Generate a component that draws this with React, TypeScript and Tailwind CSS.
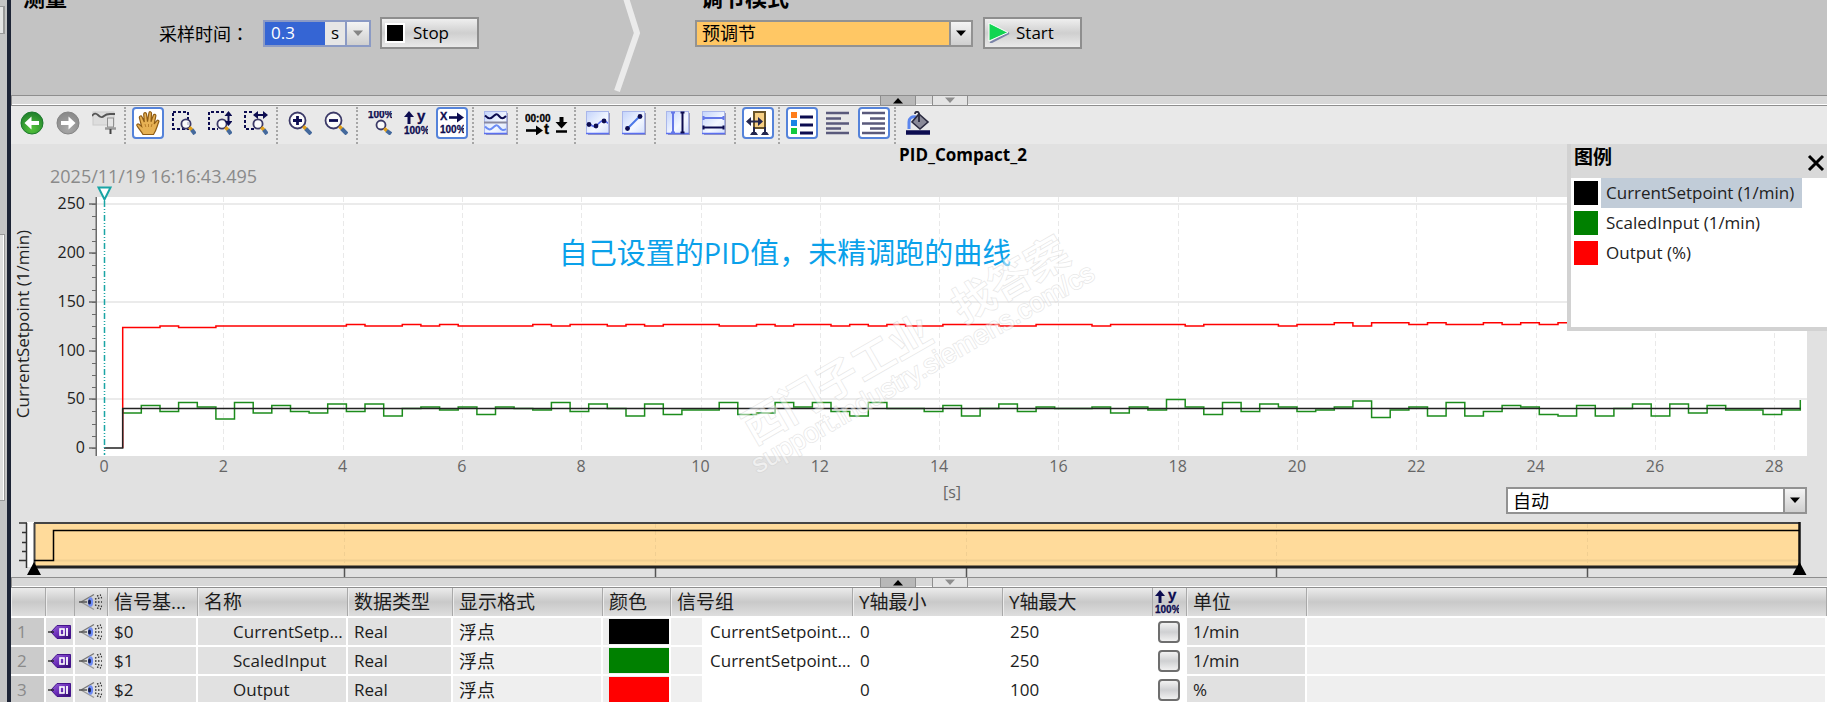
import { useState, type ReactNode } from 'react'
import clsx from 'clsx'

// ─── Types ────────────────────────────────────────────────────────────────────

interface Signal {
  base: string
  name: string
  dataType: string
  format: string
  swatch: string
  group: string
  yMin: string
  yMax: string
  unit: string
}

interface Tool {
  id: string
  label: string
  icon: ReactNode
  wide?: boolean
}

// ─── Constants ────────────────────────────────────────────────────────────────

const SIGNALS: Signal[] = [
  { base: '$0', name: 'CurrentSetpoint', dataType: 'Real', format: '浮点', swatch: 'bg-black', group: 'CurrentSetpoint_01', yMin: '0', yMax: '250', unit: '1/min' },
  { base: '$1', name: 'ScaledInput', dataType: 'Real', format: '浮点', swatch: 'bg-[#008000]', group: 'CurrentSetpoint_01', yMin: '0', yMax: '250', unit: '1/min' },
  { base: '$2', name: 'Output', dataType: 'Real', format: '浮点', swatch: 'bg-[#ff0000]', group: '', yMin: '0', yMax: '100', unit: '%' },
]

// Plot coordinates, in viewBox units
const PLOT_W = 1710
const PLOT_H = 259
const X0 = 7
const PX_PER_SEC = 59.65
const Y0 = 251
const PX_PER_UNIT = 0.975
const FIRST_SAMPLE = 25.7
const SAMPLE_STEP = 18.64

// Samples as quantised steps around the base level
const SCALED_INPUT = [
  -3, 2, -2, 4, 1, -7, 4, -3, 2, -2, -3, 3, -2, 3, -5, 0, 1, -1, 1, -4,
  1, 0, -1, 4, -2, 3, 0, -5, 3, -4, -1, -1, 4, -4, -3, 4, 1, 4, -2, -5,
  4, 0, 0, -2, 2, -5, 0, 3, -2, 1, 0, 0, 1, -3, 1, -1, 6, 1, -4, 4,
  -2, 3, 1, -2, -1, 1, 5, -6, -1, 1, -5, 4, -5, -2, 2, 1, -4, -5, 2, -5,
  0, 3, -5, 3, -3, 2, -1, -1, -4, -1,
]

const OUTPUT = [
  -1, -1, 0, -1, -1, 0, 0, 0, 0, 0, 0, 0, 1, 0, 0, 1, 0, 1, 0, 0,
  0, 0, 1, 0, 1, 1, 0, 1, 0, 1, 1, 1, 0, 0, 1, 0, 1, 1, 0, 1,
  0, 1, 0, 0, 1, 1, 1, 0, 0, 1, 1, 1, 0, 1, 1, 1, 1, 0, 1, 1,
  1, 1, 0, 1, 1, 2, 0, 2, 2, 1, 2, 1, 1, 2, 1, 2, 1, 2, 2, 1,
  2, 2, 1, 2, 1, 2, 2, 1, 2, 2,
]

const X_TICKS = [0, 2, 4, 6, 8, 10, 12, 14, 16, 18, 20, 22, 24, 26, 28]
const Y_TICKS = [0, 50, 100, 150, 200, 250]

const NAVY = '#0c0c50'

// ─── Helpers ──────────────────────────────────────────────────────────────────

const xAt = (s: number) => X0 + s * PX_PER_SEC
const yAt = (v: number) => Y0 - v * PX_PER_UNIT

function stepPath(start: string, samples: number[], base: number, step: number): string {
  const parts = samples.map((n, i) => {
    const y = (base - n * step).toFixed(1)
    return `V${y} H${(FIRST_SAMPLE + (i + 1) * SAMPLE_STEP).toFixed(1)}`
  })
  return `${start} ${parts.join(' ')}`
}

// ─── Icons ────────────────────────────────────────────────────────────────────

function Icon({ children, w = 24 }: { children: ReactNode; w?: number }) {
  return (
    <svg width={w} height="24" viewBox={`0 0 ${w} 24`} fill="none" aria-hidden="true">
      {children}
    </svg>
  )
}

function Lens({ cx, cy, r }: { cx: number; cy: number; r: number }) {
  const e = r * 0.72
  return (
    <>
      <circle cx={cx} cy={cy} r={r} fill="#fff" fillOpacity=".8" stroke="#3c3a68" strokeWidth="1.8" />
      <path d={`M${cx + e} ${cy + e} l3 3`} stroke="#e0a01c" strokeWidth="3.4" />
      <path d={`M${cx + e + 2.5} ${cy + e + 2.5} L23 23`} stroke="#44699c" strokeWidth="4" />
    </>
  )
}

function SvgText({ x, y, size = 9, fill = NAVY, children }: { x: number; y: number; size?: number; fill?: string; children: string }) {
  return (
    <text x={x} y={y} fontSize={size} fontWeight="700" fill={fill} stroke={fill} strokeWidth=".3" fontFamily="Liberation Sans, sans-serif">
      {children}
    </text>
  )
}

function Round({ id, from, to, d }: { id: string; from: string; to: string; d: string }) {
  return (
    <Icon>
      <defs>
        <radialGradient id={id} cx=".5" cy=".75" r=".8">
          <stop offset="0" stopColor={from} />
          <stop offset="1" stopColor={to} />
        </radialGradient>
      </defs>
      <circle cx="12" cy="12" r="11" fill={`url(#${id})`} stroke={to} />
      <path d={d} fill="#fff" />
    </Icon>
  )
}

function Tile() {
  return (
    <>
      <defs>
        <linearGradient id="tile" x1="0" y1="0" x2="1" y2="1">
          <stop offset="0" stopColor="#c3d3fb" />
          <stop offset=".6" stopColor="#f4f8ff" />
          <stop offset="1" stopColor="#d5e0fb" />
        </linearGradient>
      </defs>
      <path d="M2 23.500H23.500V2" stroke="#9a9ab8" strokeWidth="1.500" />
      <rect x=".5" y=".5" width="22" height="22" fill="url(#tile)" stroke="#a9b6ea" />
      <path d="M0 22.500H23" stroke="#5b6ff0" strokeWidth="1.500" />
    </>
  )
}

function Y100() {
  return (
    <Icon>
      <path d="M5 13V4" stroke={NAVY} strokeWidth="3" />
      <path d="M5 0L0 6h10z" fill={NAVY} />
      <SvgText x={13} y={10} size={15}>y</SvgText>
      <SvgText x={0} y={23} size={10}>100%</SvgText>
    </Icon>
  )
}

function Eye() {
  return (
    <svg width="24" height="18" viewBox="0 0 24 18" fill="none" aria-hidden="true">
      <path d="M15 1.500L2 9" stroke="#777" strokeWidth="1.400" />
      <path d="M2 9l13 7.500" stroke="#999" strokeWidth="1.400" />
      <path d="M0 9H8" stroke="#555" strokeWidth="1.500" />
      <ellipse cx="11.500" cy="9" rx="2.600" ry="4.800" fill="#6f8cf5" />
      <ellipse cx="10.500" cy="9" rx="1.500" ry="2.500" fill="#1d2350" />
      <path d="M16 9h7M16 6l7-1.500M16 12l7 1.500M18 3l4-1M18 15l4 1" stroke="#333" strokeWidth="1.400" strokeDasharray="1.500 1.500" />
    </svg>
  )
}

function Tag() {
  return (
    <svg width="24" height="16" viewBox="0 0 24 16" fill="none" aria-hidden="true">
      <defs>
        <linearGradient id="tag" x1="0" y1="0" x2="1" y2="1">
          <stop offset="0" stopColor="#9a6ad8" />
          <stop offset=".5" stopColor="#6a2cb8" />
          <stop offset="1" stopColor="#2c0a66" />
        </linearGradient>
      </defs>
      <path d="M3 8L9 1.500H22.500V14.500H9z" fill="url(#tag)" stroke="#45148c" />
      <path d="M0 8h6" stroke="#222" strokeWidth="1.300" />
      <rect x="12" y="5" width="4" height="6" stroke="#fff" strokeWidth="1.600" />
      <path d="M19 4v8" stroke="#fff" strokeWidth="1.800" />
    </svg>
  )
}

const TOOL_GROUPS: Tool[][] = [
  [
    { id: 'back', label: '后退', icon: <Round id="gBack" from="#55c43a" to="#1c7a2c" d="M4.500 12L11.500 5.500V10H19v4h-7.500v4.500z" /> },
    { id: 'forward', label: '前进', icon: <Round id="gFwd" from="#a9a9a9" to="#858585" d="M19.500 12L12.500 5.500V10H5v4h7.500v4.500z" /> },
    {
      id: 'pin',
      label: '固定',
      icon: (
        <Icon>
          <rect x="1" y="1" width="21" height="13" fill="#ddd" stroke="#cacaca" />
          <path d="M0 5c2 -3 4 -3 6 -1s4 3 6 1 4 -2 6 -2h5" stroke="#555" strokeWidth="1.800" />
          <rect x="15.500" y="7" width="6" height="9" fill="#e4e4e4" stroke="#909090" />
          <path d="M13 17.500h11" stroke="#999" strokeWidth="2.500" />
          <path d="M18.500 18v5" stroke="#444" strokeWidth="2" />
        </Icon>
      ),
    },
  ],
  [
    {
      id: 'hand',
      label: '移动视图',
      icon: (
        <Icon>
          <path
            d="M7 23.500C5 20 2.500 17.500 1 14.800c-.6-1.400.8-2.400 2-1.600l2.600 2.200L3.400 6.800c-.3-2 2-2.600 2.700-.8L8.300 11 7.700 3.200c0-2 2.400-2.200 2.800-.3l1 7.700L12.900 2c.3-1.900 2.700-1.600 2.600.4l-.5 8.500 2.300-6.600c.7-1.800 2.900-1 2.500.9L18.200 13l2.500-3.200c1.200-1.200 2.700-.2 2 1.300C21 15 20.500 19 17.500 23.500z"
            fill="#e6b154"
            stroke="#8f5c14"
            strokeWidth="1.200"
          />
          <path d="M9 13l.8 3M12.500 13v3M16 13l-.8 3" stroke="#b97f2c" />
        </Icon>
      ),
    },
    {
      id: 'zoom-area',
      label: '缩放选择',
      icon: (
        <Icon>
          <rect x="1" y="1" width="15" height="17" stroke={NAVY} strokeWidth="2" strokeDasharray="3 2" />
          <Lens cx={14} cy={13} r={4.6} />
        </Icon>
      ),
    },
    {
      id: 'zoom-y',
      label: '垂直缩放选择',
      icon: (
        <Icon>
          <path d="M16 1H1v17h9" stroke={NAVY} strokeWidth="2" strokeDasharray="3 2" />
          <Lens cx={14} cy={13} r={4.6} />
          <path d="M20.500 3v10" stroke={NAVY} strokeWidth="2" />
          <path d="M20.500 0l4 5h-8zM20.500 15l4-5h-8z" fill={NAVY} />
        </Icon>
      ),
    },
    {
      id: 'zoom-x',
      label: '水平缩放选择',
      icon: (
        <Icon>
          <path d="M8 1H1v17h9" stroke={NAVY} strokeWidth="2" strokeDasharray="3 2" />
          <Lens cx={14} cy={13} r={4.6} />
          <path d="M12 4h10" stroke={NAVY} strokeWidth="2" />
          <path d="M9 4l5-4v8zM24 4l-5-4v8z" fill={NAVY} />
        </Icon>
      ),
    },
  ],
  [
    {
      id: 'zoom-in',
      label: '放大',
      icon: (
        <Icon>
          <Lens cx={9.5} cy={9.5} r={8} />
          <path d="M9.500 5v9M5 9.500h9" stroke={NAVY} strokeWidth="2.800" />
        </Icon>
      ),
    },
    {
      id: 'zoom-out',
      label: '缩小',
      icon: (
        <Icon>
          <Lens cx={9.5} cy={9.5} r={8} />
          <path d="M5 9.500h9" stroke={NAVY} strokeWidth="2.800" />
        </Icon>
      ),
    },
  ],
  [
    {
      id: 'fit-all',
      label: '全部显示',
      icon: (
        <Icon>
          <SvgText x={0} y={7} size={10}>100%</SvgText>
          <Lens cx={13} cy={14} r={4.5} />
        </Icon>
      ),
    },
    { id: 'fit-y', label: 'Y轴缩放', icon: <Y100 /> },
    {
      id: 'fit-x',
      label: 'X轴缩放',
      icon: (
        <Icon>
          <SvgText x={0} y={9} size={11}>X</SvgText>
          <path d="M9 6.500h9" stroke={NAVY} strokeWidth="2.600" />
          <path d="M24 6.500l-7-5v10z" fill={NAVY} />
          <SvgText x={0} y={22} size={10}>100%</SvgText>
        </Icon>
      ),
    },
  ],
  [
    {
      id: 'lanes',
      label: '在单独的区域中显示',
      icon: (
        <Icon>
          <Tile />
          <path d="M0 11.500h23" stroke="#8a8aa0" strokeWidth="2" />
          <path d="M1 4.500c3 3 5 4 7.500 1.500s4 -4 6.500 -1 4 3 7 0" stroke={NAVY} strokeWidth="2" />
          <path d="M1 15.500c3 3 5 4 7.500 1.500s4 -4 6.500 -1 4 4 7 2" stroke="#6b8cf5" strokeWidth="2" />
        </Icon>
      ),
    },
  ],
  [
    {
      id: 'time',
      label: '时间轴单位',
      wide: true,
      icon: (
        <Icon w={44}>
          <SvgText x={0} y={11} size={10} fill="#000">00:00</SvgText>
          <path d="M1 19.500h11" stroke="#000" strokeWidth="2.600" />
          <path d="M18 19.500l-7-5v10z" fill="#000" />
          <SvgText x={19} y={23} size={15} fill="#000">t</SvgText>
          <path d="M36.500 6v6" stroke="#000" strokeWidth="4" />
          <path d="M36.500 17.500l-6-6.500h12z" fill="#000" />
          <path d="M31 20.500h11" stroke="#000" strokeWidth="2.500" />
        </Icon>
      ),
    },
  ],
  [
    {
      id: 'samples',
      label: '显示采样值',
      icon: (
        <Icon>
          <Tile />
          <path d="M3 14c3 -1 4 3 7 1s4 -6 8 -5 3 2 4 2" stroke="#5b6ff0" strokeWidth="1.600" />
          <circle cx="3" cy="13.500" r="2.400" fill={NAVY} />
          <circle cx="10" cy="15" r="2.400" fill={NAVY} />
          <circle cx="18" cy="10" r="2.400" fill={NAVY} />
        </Icon>
      ),
    },
    {
      id: 'interpolate',
      label: '插补采样值',
      icon: (
        <Icon>
          <Tile />
          <path d="M5 18L18 5" stroke="#4a78e8" strokeWidth="2" />
          <circle cx="5.500" cy="17.500" r="2.400" fill={NAVY} />
          <circle cx="18" cy="5.500" r="2.400" fill={NAVY} />
        </Icon>
      ),
    },
  ],
  [
    {
      id: 'v-cursors',
      label: '垂直测量光标',
      icon: (
        <Icon>
          <Tile />
          <path d="M7 1v21M5 1.500h4M5 21.500h4" stroke="#6478e8" strokeWidth="2" />
          <path d="M16.500 1v21M14.500 1.500h4M14.500 21.500h4" stroke={NAVY} strokeWidth="2" />
        </Icon>
      ),
    },
    {
      id: 'h-cursors',
      label: '水平测量光标',
      icon: (
        <Icon>
          <Tile />
          <path d="M1 7h21M1.500 5v4M21.500 5v4" stroke="#6478e8" strokeWidth="2" />
          <path d="M1 16.500h21M1.500 14.500v4M21.500 14.500v4" stroke={NAVY} strokeWidth="2" />
        </Icon>
      ),
    },
  ],
  [
    {
      id: 'chart-window',
      label: '图表窗口',
      icon: (
        <Icon>
          <rect x="8" y="1" width="11" height="16" fill="#f7cf84" stroke="#6a5428" strokeWidth="2" />
          <path d="M4 10.500h9" stroke="#23264e" strokeWidth="2" />
          <path d="M0 10.500l5-4.500v9zM17 10.500l-5-4.500v9z" fill="#23264e" />
          <path d="M8 16v6M19 16v6" stroke="#23264e" strokeWidth="2" />
          <path d="M4 24l2-3h4l2 3zM15 24l2-3h4l2 3z" fill="#23264e" />
        </Icon>
      ),
    },
  ],
  [
    {
      id: 'legend',
      label: '显示图例',
      icon: (
        <Icon>
          <rect x="1" y="1" width="6" height="6" fill="#ff7d1a" />
          <rect x="1" y="9" width="6" height="6" fill="#1a84e6" />
          <rect x="1" y="17" width="6" height="6" fill="#12c93e" />
          <path d="M10 6h13M10 14h13M10 22h13" stroke={NAVY} strokeWidth="2.800" />
        </Icon>
      ),
    },
    { id: 'align-left', label: '左对齐', icon: <Icon><path d="M0 2h23M0 7.500h15M0 12.500h23M0 17.500h15M0 22h23" stroke="#5a5a7c" strokeWidth="2.400" /></Icon> },
    { id: 'align-right', label: '右对齐', icon: <Icon><path d="M0 2h23M8 7.500h15M0 12.500h23M8 17.500h15M0 22h23" stroke="#5a5a7c" strokeWidth="2.400" /></Icon> },
  ],
  [
    {
      id: 'background',
      label: '背景色',
      icon: (
        <Icon>
          <path d="M3 18V11c0-4 3-6 7-5" stroke="#5b85ee" strokeWidth="3" />
          <path d="M13 3l9 8-8 7-8-7z" fill="#8a8a98" stroke="#2b2b40" strokeWidth="1.600" />
          <path d="M13 11V3c0-3-4-3-4 0" stroke="#2b2b40" strokeWidth="1.800" />
          <path d="M0 21.500h24" stroke={NAVY} strokeWidth="4.500" />
        </Icon>
      ),
    },
  ],
]

// ─── Small Parts ──────────────────────────────────────────────────────────────

function Arrow({ up, className }: { up?: boolean; className?: string }) {
  return (
    <svg width="12" height="7" viewBox="0 0 12 7" className={className} aria-hidden="true">
      <path d={up ? 'M1 6.500h10L6 1z' : 'M1 .5h10L6 6z'} fill="currentColor" />
    </svg>
  )
}

function Splitter() {
  return (
    <div className="flex h-[11px] shrink-0 justify-center border-y border-l border-[#8e8e8e] bg-[#d8d8d8] pl-2 shadow-[inset_0_-1px_0_#fff]">
      <button aria-label="向上折叠" className="flex w-9 items-center justify-center border-x border-[#8e8e8e] bg-[#b8b8b8]">
        <Arrow up />
      </button>
      <button aria-label="向下折叠" className="ml-4 flex w-9 items-center justify-center border-x border-[#8e8e8e] bg-[#e4e4e4] text-[#8e8e8e]">
        <Arrow />
      </button>
    </div>
  )
}

function Combo({ id, label, option, className }: { id: string; label: string; option: string; className: string }) {
  return (
    <div className="relative h-[27px]">
      <select id={id} aria-label={label} className={clsx('h-full w-full appearance-none border-2 border-[#929292] px-[5px] text-lg leading-none', className)}>
        <option>{option}</option>
      </select>
      <span className="pointer-events-none absolute top-0 right-0 flex h-full w-6 items-center justify-center border-2 border-[#929292] bg-linear-to-b from-[#f4f4f4] to-[#cfcfcf]">
        <Arrow />
      </span>
    </div>
  )
}

function ActionButton({ icon, children }: { icon: ReactNode; children: string }) {
  return (
    <button className="flex h-8 w-[99px] items-center gap-[6px] border-2 border-[#8e8e8e] bg-linear-to-b from-[#efefef] via-[#cfcfcf] to-[#e9e9e9] px-[3px] text-[17px]">
      {icon}
      {children}
    </button>
  )
}

// ─── Controller Settings ──────────────────────────────────────────────────────

function SettingsBar() {
  return (
    <div className="flex h-[95px] shrink-0 overflow-hidden bg-[#c3c3c3]">
      <section className="w-[600px] shrink-0 pl-3">
        <h2 className="flex h-2 items-end text-[22px] leading-[22px] font-bold">测量</h2>
        <div className="mt-[9px] flex h-8 items-center pl-[136px]">
          <label htmlFor="sample-time" className="w-[104px] text-lg">
            采样时间<span lang="zh-TW" className="font-['Noto_Sans_CJK_TC',sans-serif]">：</span>
          </label>
          <div className="flex h-[27px] w-[108px] border-2 border-[#8b9ac4] bg-[#e6e6e6] text-[17px]">
            <input id="sample-time" defaultValue="0.3" className="min-w-0 flex-1 bg-[#3565d4] px-[6px] text-white outline-none" />
            <span className="flex w-5 items-center justify-center">s</span>
            <button aria-label="选择采样时间" className="flex w-6 items-center justify-center border-l-2 border-[#8b9ac4] bg-linear-to-b from-[#f4f4f4] to-[#cfcfcf] text-[#858585]">
              <Arrow />
            </button>
          </div>
          <div className="ml-[9px]">
            <ActionButton icon={<span className="mr-[2px] h-5 w-5 border-2 border-white bg-black" />}>Stop</ActionButton>
          </div>
        </div>
      </section>

      <svg width="30" height="95" viewBox="0 0 30 95" fill="none" className="shrink-0" aria-hidden="true">
        <path d="M15 -2L26 33 6 91" stroke="#ebebeb" strokeWidth="6" />
      </svg>

      <section className="pl-[54px]">
        <h2 className="ml-[6px] flex h-2 items-end text-[22px] leading-[22px] font-bold">调节模式</h2>
        <div className="mt-[9px] flex h-8 items-center gap-[10px]">
          <div className="w-[278px]">
            <Combo id="tuning-mode" label="调节模式" option="预调节" className="bg-[#ffc764]" />
          </div>
          <ActionButton
            icon={
              <svg width="22" height="20" viewBox="0 0 22 20" aria-hidden="true">
                <path d="M2 20L21 10" stroke="#7b84a8" strokeWidth="2" />
                <path d="M1 0v18L20 9.500z" fill="#12d552" stroke="#fff" />
              </svg>
            }
          >
            Start
          </ActionButton>
        </div>
      </section>
    </div>
  )
}

// ─── Toolbar ──────────────────────────────────────────────────────────────────

function Toolbar() {
  const [pressed, setPressed] = useState<string[]>(['hand', 'fit-x', 'chart-window', 'legend', 'align-right'])
  const toggle = (id: string) => setPressed(p => (p.includes(id) ? p.filter(x => x !== id) : [...p, id]))

  return (
    <div role="toolbar" className="flex h-[38px] shrink-0 gap-1 bg-[#e9e9e9] pt-px pl-[5px]">
      {TOOL_GROUPS.map((group, i) => (
        <div key={group[0].id} className="flex gap-1">
          {i > 0 && <span className="w-1 border-l-2 border-dotted border-[#a6a6a6]" />}
          {group.map(tool => (
            <button
              key={tool.id}
              aria-label={tool.label}
              aria-pressed={pressed.includes(tool.id)}
              onClick={() => toggle(tool.id)}
              className={clsx(
                'flex h-8 items-center justify-center rounded-sm border-2',
                tool.wide ? 'w-[46px]' : 'w-8',
                pressed.includes(tool.id) ? 'border-[#5583da] bg-white' : 'border-transparent',
              )}
            >
              <span className="shrink-0">{tool.icon}</span>
            </button>
          ))}
        </div>
      ))}
    </div>
  )
}

// ─── Trend Chart ──────────────────────────────────────────────────────────────

function YAxis() {
  const minor = Array.from({ length: 21 }, (_, i) => i * 12.5)
  return (
    <svg width="86" height="283" className="shrink-0 overflow-visible" fontSize="16">
      <text transform="translate(18 127) rotate(-90)" textAnchor="middle" fontSize="17" fill="#222">
        CurrentSetpoint (1/min)
      </text>
      <path d="M85.500 0V259" stroke="#6b6b6b" strokeWidth="2" />
      {minor.map(v => (
        <path key={v} d={`M81 ${Math.round(yAt(v))}.500h5`} stroke="#6b6b6b" />
      ))}
      {Y_TICKS.map(v => (
        <g key={v}>
          <path d={`M78 ${Math.round(yAt(v))}h8`} stroke="#6b6b6b" strokeWidth="1.500" />
          <text x="74" y={Math.round(yAt(v)) + 5} textAnchor="end" fill="#222">{v}</text>
        </g>
      ))}
    </svg>
  )
}

function Plot() {
  const greenPath = stepPath(`M${FIRST_SAMPLE} 211.500`, SCALED_INPUT, 211.5, 1.5) + ' V203'
  const redPath = stepPath(`M${FIRST_SAMPLE} 251`, OUTPUT, 129, 1.6)

  return (
    <svg width="100%" height="283" className="min-w-0 flex-1 overflow-visible" fontSize="16">
      <svg width="100%" height={PLOT_H} viewBox={`0 0 ${PLOT_W} ${PLOT_H}`} preserveAspectRatio="none" fill="none" className="overflow-visible">
        <rect width={PLOT_W} height={PLOT_H} fill="#fff" />
        {[50, 150, 250].map(v => (
          <path key={v} d={`M0 ${Math.round(yAt(v))}H${PLOT_W}`} stroke="#ebebeb" strokeWidth="2" />
        ))}
        {X_TICKS.slice(1).map(s => (
          <path key={s} d={`M${Math.round(xAt(s))}.500 0V256`} stroke="#e9e9e9" strokeDasharray="5 3" />
        ))}
        <path d={greenPath} stroke="#1c8c1c" strokeWidth="1.500" />
        <path d={redPath} stroke="#ff0000" strokeWidth="1.500" />
        <path d={`M${X0} 251H${FIRST_SAMPLE}V211.500H1703.500`} stroke="#222" strokeWidth="1.500" />
        <path d={`M${X0 + 0.5} 4V258`} stroke="#1aa5a5" strokeWidth="1.500" strokeDasharray="6 2 1 2 1 2" />
        <path d={`M${X0 - 5.5} -9.500h12l-6 12z`} fill="#fff" stroke="#1aa5a5" strokeWidth="2" />
      </svg>

      {X_TICKS.map(s => (
        <text key={s} x={`${(xAt(s) / PLOT_W) * 100}%`} y="275" textAnchor="middle" fill="#666">{s}</text>
      ))}

      <text x="27%" y="67" fontSize="29" fill="#0aa1ea">自己设置的PID值，未精调跑的曲线</text>

      {/* Outlined stamp laid across the traces */}
      <svg x="38.400%" y="270" className="overflow-visible" fill="#fff" stroke="#d0d0d0" strokeWidth="1.500" paintOrder="stroke" opacity=".5">
        <g transform="rotate(-30)">
          <text x="11" y="-19" fontSize="42" fontWeight="500">西门子工业</text>
          <text x="253" y="-19" fontSize="42" fontWeight="500">找答案</text>
          <text x="0" y="8" fontSize="27" fontFamily="Liberation Sans, sans-serif">support.industry.siemens.com/cs</text>
        </g>
      </svg>
    </svg>
  )
}

function Overview() {
  return (
    <svg width="100%" height="55" viewBox="0 0 1816 55" preserveAspectRatio="none" fill="none" className="block" aria-hidden="true">
      <rect x="16" y="0" width="7" height="45" fill="#fff" />
      <path d="M15.500 1V46M8 1h8M11 10.500h5M11 20.500h5M11 29.500h5M8 38.500h8" stroke="#333" strokeWidth="1.500" />
      <rect x="23" y="1" width="1766" height="44" fill="#ffdb9b" />
      <path d="M23 38.500H1789" stroke="#f1cf92" strokeWidth="2" />
      {[333, 644, 955, 1265, 1576].map(x => (
        <g key={x}>
          <path d={`M${x}.500 2V44`} stroke="#f1cf92" strokeDasharray="4 3" />
          <path d={`M${x}.500 46v9`} stroke="#555" strokeWidth="1.500" />
        </g>
      ))}
      <path d="M23.500 1V45M23 1H1789" stroke="#444" strokeWidth="2" />
      <path d="M23 45H1789" stroke="#222" strokeWidth="3" />
      <path d="M1788.500 0V46" stroke="#111" strokeWidth="2.500" />
      <path d="M23 38.500H42.500V8.500H1788" stroke="#000" strokeWidth="1.500" />
      <path d="M23 40l7 13H16zM1788.500 40l7 13h-14z" fill="#000" />
    </svg>
  )
}

function Legend({ onClose }: { onClose: () => void }) {
  return (
    <aside className="absolute top-0 right-0 h-[187px] w-[260px] border-b-4 border-l-4 border-[#d2d2d2] bg-white">
      <div className="flex h-[34px] items-center justify-between bg-[#d9d9d9] pr-[2px] pl-[3px]">
        <h3 className="pb-2 text-[19px] leading-none font-bold">图例</h3>
        <button aria-label="关闭图例" onClick={onClose}>
          <svg width="18" height="18" viewBox="0 0 18 18" className="mt-1" aria-hidden="true">
            <path d="M2 2l14 14M16 2L2 16" stroke="#000" strokeWidth="3" />
          </svg>
        </button>
      </div>
      <ul>
        {SIGNALS.map((s, i) => (
          <li key={s.base} className="flex h-[30px] items-center gap-[3px] pl-[3px]">
            <span className={clsx('h-6 w-6 shrink-0', s.swatch)} />
            <span className={clsx('flex h-full items-center pr-2 pl-[5px] text-[17px] whitespace-nowrap text-[#222]', i === 0 && 'bg-[#c1ccd8]')}>
              {s.name} ({s.unit})
            </span>
          </li>
        ))}
      </ul>
    </aside>
  )
}

function TrendView() {
  const [legendOpen, setLegendOpen] = useState(true)

  return (
    <section className="relative shrink-0 bg-[#e1e1e1]">
      <h1 className="h-[22px] pl-[88px] text-center text-[17px] leading-[22px] font-bold">PID_Compact_2</h1>
      <p className="h-[31px] pl-[39px] text-lg leading-5 text-[#8a8a8a]">2025/11/19 16:16:43.495</p>
      <div className="flex pr-5">
        <YAxis />
        <Plot />
      </div>
      <div className="flex h-[34px] items-end pr-5 pl-[86px]">
        <span className="flex-1" />
        <span className="pb-[10px] text-base leading-6 text-[#666]">[s]</span>
        <div className="flex flex-1 justify-end">
          <div className="w-[301px]">
            <Combo id="time-range" label="时间范围" option="自动" className="bg-white" />
          </div>
        </div>
      </div>
      <div className="pt-2">
        <Overview />
      </div>
      {legendOpen && <Legend onClose={() => setLegendOpen(false)} />}
    </section>
  )
}

// ─── Signal Table ─────────────────────────────────────────────────────────────

function Head({ children }: { children?: ReactNode }) {
  return (
    <th className="truncate border-r border-[#a9a9a9] pr-0 pl-[6px] text-left font-normal shadow-[inset_1px_0_0_#ececec]">
      {children}
    </th>
  )
}

function SignalTable() {
  return (
    <table className="w-full shrink-0 table-fixed border-separate border-spacing-0 text-[17px] text-[#1c1c1c]">
      <colgroup>
        <col className="w-[35px]" />
        <col className="w-[29px]" />
        <col className="w-[33px]" />
        <col className="w-[90px]" />
        <col className="w-[150px]" />
        <col className="w-[105px]" />
        <col className="w-[150px]" />
        <col className="w-[68px]" />
        <col className="w-[182px]" />
        <col className="w-[150px]" />
        <col className="w-[150px]" />
        <col className="w-[34px]" />
        <col className="w-[120px]" />
        <col />
      </colgroup>
      <thead className="bg-linear-to-b from-[#ececec] via-[#c9c9c9] to-[#dedede] text-[19px] leading-none">
        <tr className="h-7">
          <Head />
          <Head />
          <th className="border-r border-[#a9a9a9] pl-1"><Eye /></th>
          <Head>信号基...</Head>
          <Head>名称</Head>
          <Head>数据类型</Head>
          <Head>显示格式</Head>
          <Head>颜色</Head>
          <Head>信号组</Head>
          <Head>Y轴最小</Head>
          <Head>Y轴最大</Head>
          <th className="border-r border-[#a9a9a9] pl-[2px]"><Y100 /></th>
          <Head>单位</Head>
          <Head />
        </tr>
      </thead>
      <tbody className="[&_td]:h-[29px] [&_td]:border-t-2 [&_td]:border-r-2 [&_td]:border-white [&_td]:py-0 [&_td]:leading-6">
        {SIGNALS.map((s, i) => (
          <tr key={s.base}>
            <td className="bg-[#cbcbcb] pl-[6px] text-[#8a8a8a]">{i + 1}</td>
            <td className="bg-[#e1e1e1] pl-[2px]"><Tag /></td>
            <td className="bg-[#e1e1e1] pl-1"><Eye /></td>
            <td className="bg-[#e1e1e1] pl-[6px]">{s.base}</td>
            <td className="truncate bg-[#e1e1e1] pl-[35px]">{s.name}</td>
            <td className="bg-[#e1e1e1] pl-[6px]">{s.dataType}</td>
            <td className="bg-[#efefef] pl-[6px] text-lg">{s.format}</td>
            <td className="bg-[#efefef] pl-[6px]">
              <div className={clsx('h-[25px]', s.swatch)} />
            </td>
            <td className="bg-[#efefef]">
              <div className="ml-[31px] h-[27px] truncate bg-white pl-2 leading-[27px]">{s.group}</div>
            </td>
            <td className="bg-white pl-[7px]">{s.yMin}</td>
            <td className="bg-white pl-[7px]">{s.yMax}</td>
            <td className="bg-white pl-[5px]">
              <input
                type="checkbox"
                aria-label={`${s.name} Y轴缩放`}
                className="block h-[22px] w-[22px] appearance-none rounded-sm border-2 border-[#6e6e6e] bg-linear-to-b from-[#f2f2f2] via-[#cfd0d2] to-[#f0f0f0] checked:bg-[#5583da]"
              />
            </td>
            <td className="bg-[#e1e1e1] pl-[6px]">{s.unit}</td>
            <td className="bg-[#efefef]" />
          </tr>
        ))}
      </tbody>
    </table>
  )
}

// ─── Main Component ───────────────────────────────────────────────────────────

export default function App() {
  return (
    <div className="flex h-screen overflow-hidden bg-white font-['Open_Sans','Noto_Sans_CJK_SC',sans-serif] text-black">
      {/* Edge of the neighbouring project panel */}
      <div className="w-[7px] shrink-0 bg-[#c4c4c4] pr-[2px]">
        <div className="mt-[6px] h-7 border-y border-r-2 border-[#999] bg-[#e4e4e4]" />
        <div className="mt-[200px] h-[267px] border-y border-r border-[#999] bg-[#e1e1e1] shadow-[inset_-1px_0_0_#fff]" />
      </div>
      <div className="w-1 shrink-0 bg-[#1d2435]" />
      <main className="flex min-w-0 flex-1 flex-col">
        <SettingsBar />
        <Splitter />
        <Toolbar />
        <TrendView />
        <Splitter />
        <SignalTable />
      </main>
    </div>
  )
}
